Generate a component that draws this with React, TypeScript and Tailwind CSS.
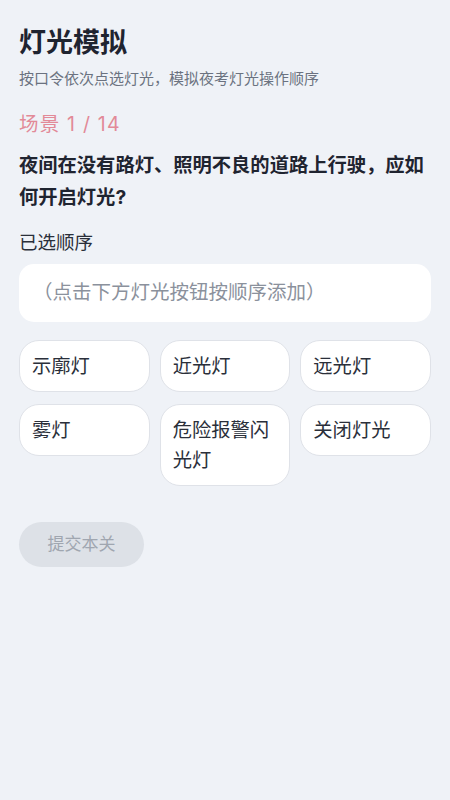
import React, { useState } from 'react';

const LIGHTS = ['示廓灯', '近光灯', '远光灯', '雾灯', '危险报警闪光灯', '关闭灯光'];

const App: React.FC = () => {
  const [picked, setPicked] = useState<string[]>([]);

  return (
    <div
      className="min-h-screen bg-[#eff2f7] px-[19px] pt-[24px] pb-10 text-[#1f2430]"
      style={{ fontFamily: '"Inter", "Noto Sans CJK SC", "Noto Sans", sans-serif' }}
    >
      <h1 className="text-[27px] font-bold leading-[38px]">灯光模拟</h1>
      <p className="mt-[7px] text-[15px] leading-[20px] text-[#6b7280]">
        按口令依次点选灯光，模拟夜考灯光操作顺序
      </p>

      <div className="mt-[21px] text-[19.5px] leading-[28px] tracking-[1.2px] text-[#e28a98]">
        场景 1 / 14
      </div>
      <p className="mt-[11px] text-[19.3px] font-bold leading-[32px]">
        夜间在没有路灯、照明不良的道路上行驶，应如何开启灯光?
      </p>

      <div className="mt-[17px] text-[18.5px] leading-[24px] text-[#2a2f3a]">已选顺序</div>
      <div className="mt-[10px] flex h-[58px] items-center rounded-[15px] bg-white px-[14px] text-[19.5px] text-[#8b919c]">
        {picked.length === 0 ? '（点击下方灯光按钮按顺序添加）' : picked.join(' → ')}
      </div>

      <div className="mt-[18px] grid grid-cols-3 items-start gap-x-[10px] gap-y-[12px]">
        {LIGHTS.map((l) => (
          <button
            key={l}
            onClick={() => setPicked([...picked, l])}
            className="rounded-[20px] border border-[#dfe2e8] bg-white px-[12px] py-[10px] text-left text-[19.3px] leading-[30px] text-[#2a2f3a]"
          >
            {l}
          </button>
        ))}
      </div>

      <button
        disabled
        className="mt-[36px] h-[45px] w-[125px] rounded-full bg-[#dde1e7] text-[17px] text-[#a0a6b0]"
      >
        提交本关
      </button>
    </div>
  );
};

export default App;
